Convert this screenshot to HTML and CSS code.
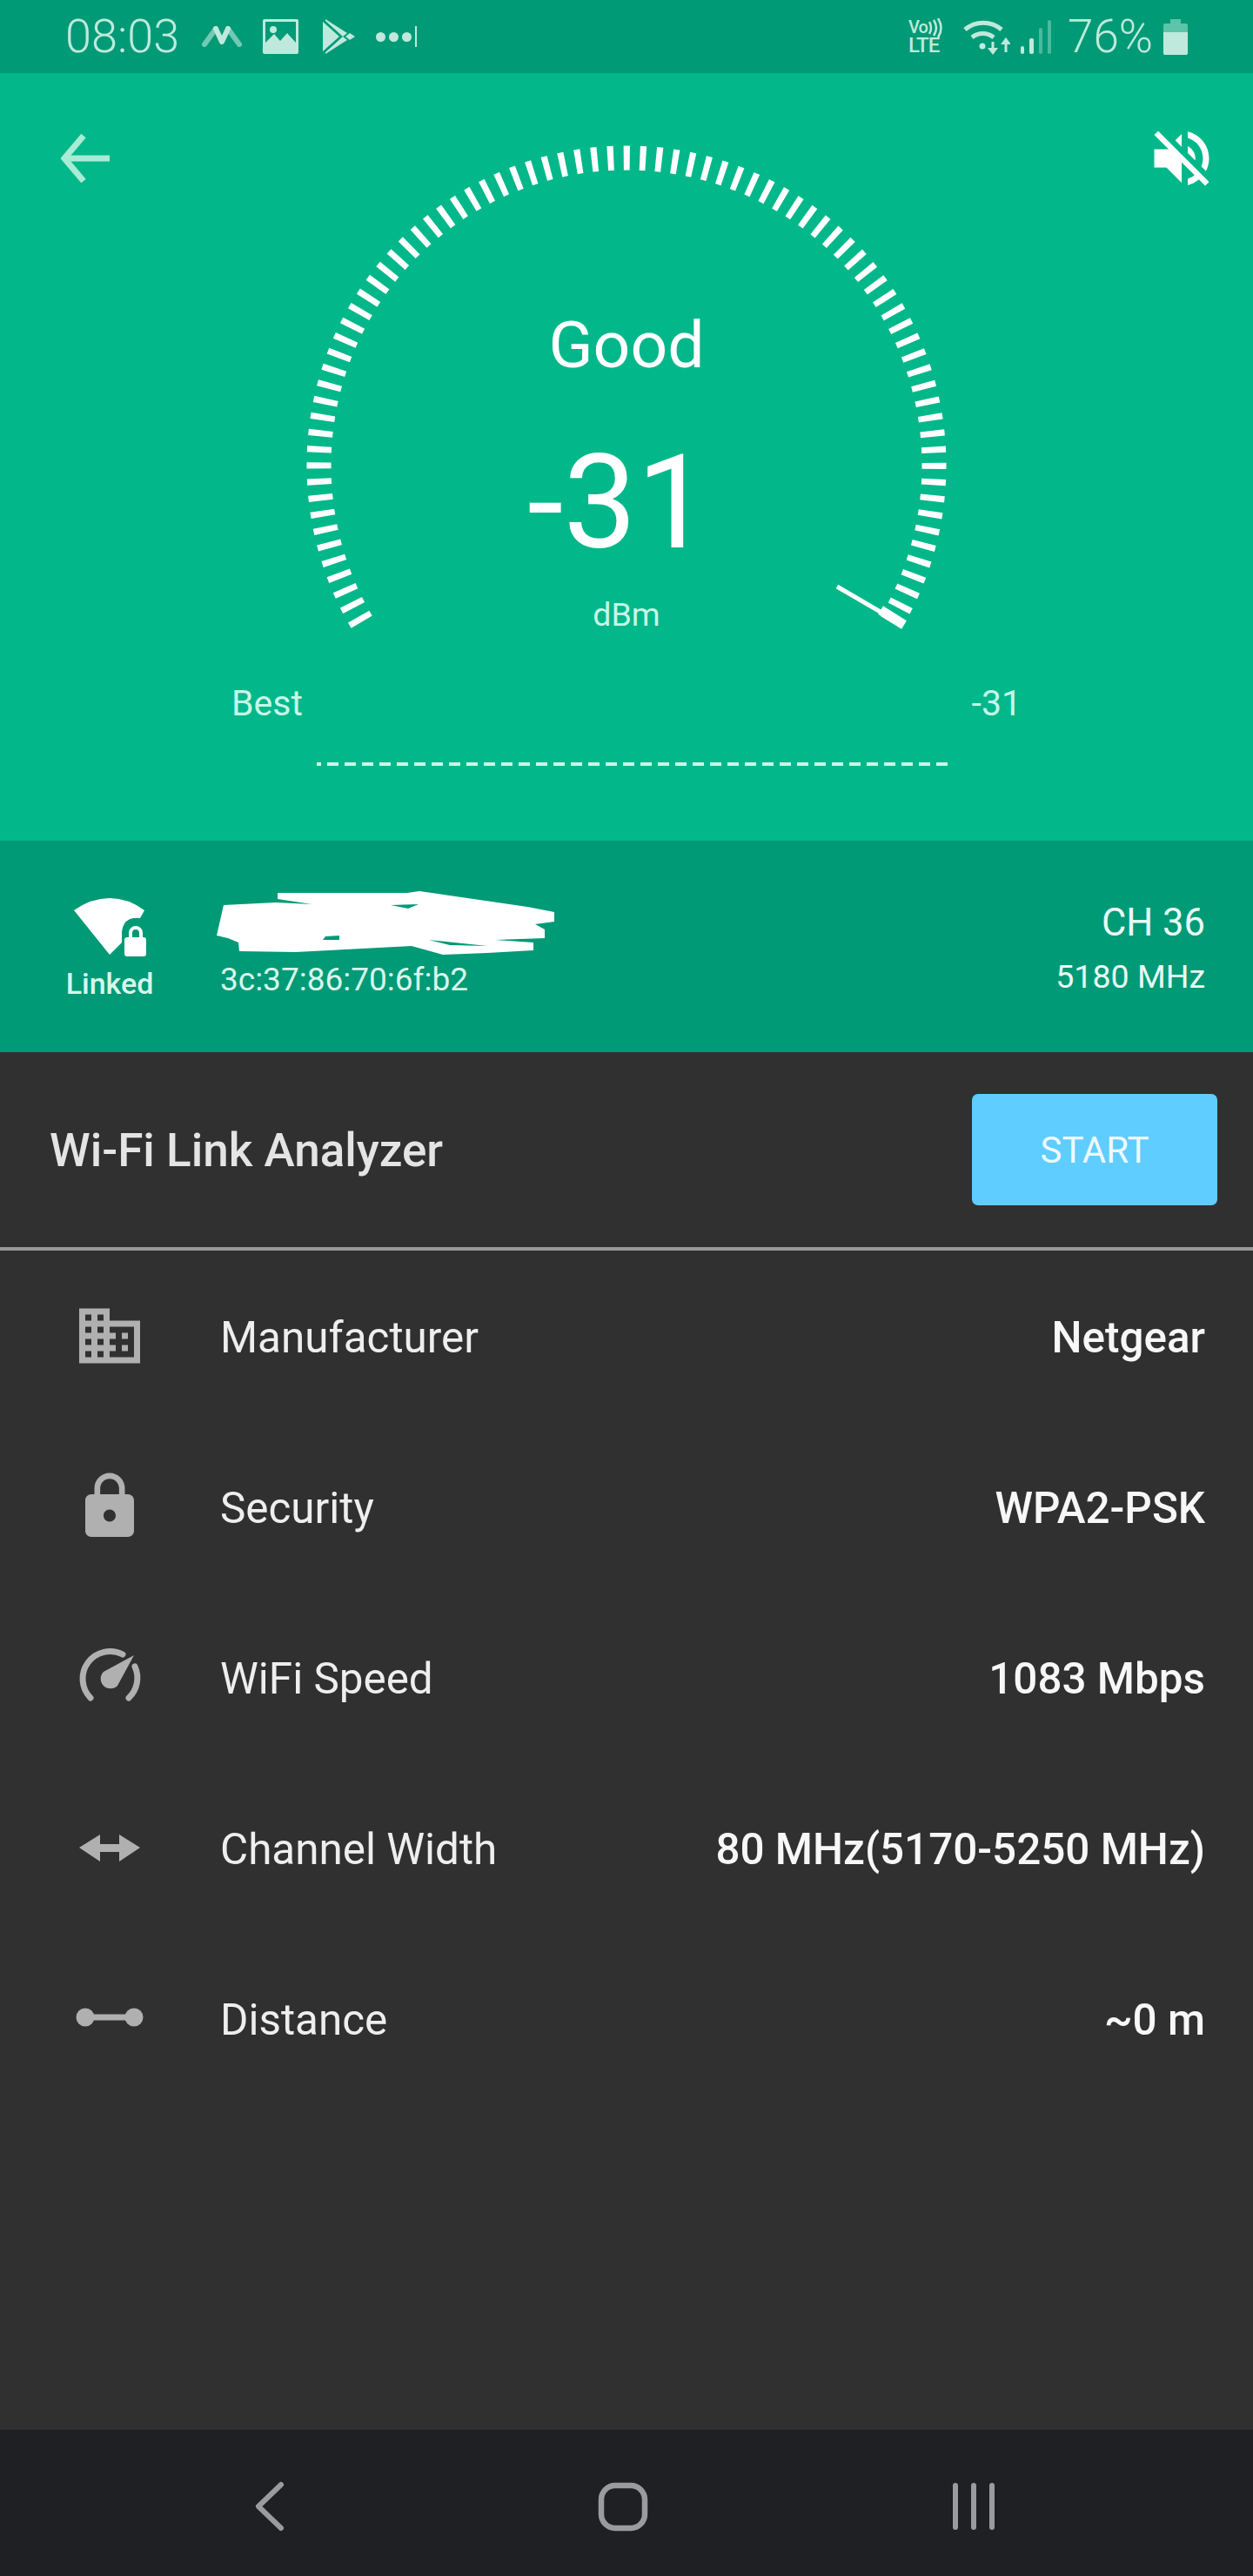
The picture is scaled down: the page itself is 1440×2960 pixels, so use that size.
FILE: index.html
```html
<!DOCTYPE html>
<html lang="en">
<head>
    <meta charset="UTF-8">
    <meta name="viewport" content="width=device-width, initial-scale=1.0">
    <title>Wi-Fi Link Analyzer</title>
    <link rel="stylesheet" href="styles.css">
</head>
<body>
    <div class="status-bar">
        <div class="status-left">
            <span class="clock">08:03</span>
            <svg class="st-m" width="46" height="24" viewBox="0 0 46 24">
                <path class="dim" d="M3 21L16 3M43 21L30 3" fill="none" stroke-width="6" stroke-linecap="round"/>
                <path d="M16 3L23 18L30 3" fill="none" stroke-width="6" stroke-linecap="round" stroke-linejoin="round"/>
            </svg>
            <svg class="st-img" width="41" height="40" viewBox="0 0 41 40">
                <path fill-rule="evenodd" d="M2 0h37a2 2 0 0 1 2 2v36a2 2 0 0 1-2 2H2a2 2 0 0 1-2-2V2a2 2 0 0 1 2-2zM3 3v24l10-10 7 8 8-9 10 11V3z"/>
                <circle cx="12" cy="12" r="4"/>
            </svg>
            <svg class="st-play" width="37" height="40" viewBox="0 0 37 40">
                <path d="M0 3L19 20L0 37zM3 0L28 16L23 20L3 2zM3 40L28 24L23 20L3 38zM26 20L31 16L37 20L31 24z"/>
            </svg>
            <div class="st-dots"><i></i><i></i><i></i><b></b></div>
        </div>
        <div class="status-right">
            <div class="st-volte">
                <div class="volte-top">
                    <span>Vo</span>
                    <svg width="17" height="22" viewBox="0 0 17 22">
                        <path d="M1 4q4 7 0 14M6 2q6 9 0 18M11 0q7 11 0 22" fill="none" stroke-width="2.5"/>
                    </svg>
                </div>
                <div class="volte-lte">LTE</div>
            </div>
            <svg class="st-wifi" width="55" height="41" viewBox="0 0 55 41">
                <path d="M3 12A32 32 0 0 1 45 12M11 21A20 20 0 0 1 36 21" fill="none" stroke-width="5"/>
                <circle cx="23" cy="31" r="3.5"/>
                <path d="M35 26v10M50 38v-10" fill="none" stroke-width="3"/>
                <path d="M29 33h12l-6 8zM44 29h12l-6-8z"/>
            </svg>
            <div class="st-signal"><i class="s1"></i><i class="s2"></i><i class="s3"></i><i class="s4"></i></div>
            <span class="battery-pct">76%</span>
            <div class="battery"><div class="battery-cap"></div><div class="battery-body"><div class="battery-fill"></div></div></div>
        </div>
    </div>

    <div class="meter">
        <div class="meter-top">
            <svg class="back" width="56" height="56" viewBox="0 0 56 56">
                <path d="M56 28H4M26 2L4 28L26 54" fill="none" stroke-width="7"/>
            </svg>
            <div class="gauge">
                <svg class="gauge-ticks" width="760" height="590" viewBox="0 0 760 590">
                    <path class="ticks" d="M77 567A353.5 353.5 0 1 1 683 567"/>
                    <path class="needle" d="M622 524L682 559"/>
                    <path class="needle-end" d="M672 551L699 568"/>
                </svg>
                <div class="gauge-word">Good</div>
                <div class="gauge-value">-31</div>
                <div class="gauge-unit">dBm</div>
            </div>
            <svg class="mute" width="84" height="84" viewBox="0 0 24 24">
                <path d="M16.5 12c0-1.77-1.02-3.29-2.5-4.03v2.21l2.45 2.45c.03-.2.05-.41.05-.63zm2.5 0c0 .94-.2 1.82-.54 2.64l1.51 1.51C20.63 14.91 21 13.5 21 12c0-4.28-2.99-7.86-7-8.77v2.06c2.89.86 5 3.54 5 6.71zM4.27 3L3 4.27 7.73 9H3v6h4l5 5v-6.73l4.25 4.25c-.67.52-1.42.93-2.25 1.18v2.06c1.38-.31 2.63-.95 3.69-1.81L19.73 21 21 19.73l-9-9L4.27 3zM12 4L9.91 6.09 12 8.18V4z"/>
            </svg>
        </div>
        <div class="range">
            <span>Best</span>
            <span>-31</span>
        </div>
        <div class="range-line"></div>
    </div>

    <div class="link-strip">
        <div class="link-state">
            <svg width="90" height="68" viewBox="0 0 90 68">
                <path d="M2 14Q22 0 43 0Q64 0 83 14L78 23Q58 21 57 40V51L43 65z"/>
                <path fill-rule="evenodd" d="M63 45h2v-5a8 8 0 0 1 16 0v5h1a3 3 0 0 1 3 3v16a3 3 0 0 1-3 3H63a3 3 0 0 1-3-3V48a3 3 0 0 1 3-3zm6 0h8v-5a4 4 0 0 0-8 0z"/>
            </svg>
            <div class="link-label">Linked</div>
        </div>
        <div class="link-name">
            <svg class="scribble" width="388" height="73" viewBox="0 0 388 73">
                <path fill-rule="evenodd" d="M70 2L219 2L233 0L357 18L388 24V35L366 38L377 44V54L320 56L364 59V68L311 71L260 73L224 63L91 70L26 69L25 59L13 54L0 51L8 16L68 13L109 15L70 9zM200 16L232 15L220 20zM244 56L311 63L268 62zM125 52L141 51V56L122 56z"/>
            </svg>
            <div class="mac">3c:37:86:70:6f:b2</div>
        </div>
        <div class="link-channel">
            <div class="channel">CH 36</div>
            <div class="freq">5180 MHz</div>
        </div>
    </div>

    <div class="panel">
        <div class="panel-head">
            <div class="panel-title">Wi-Fi Link Analyzer</div>
            <button class="start-btn">START</button>
        </div>
        <div class="row">
            <svg class="row-icon" width="84" height="84" viewBox="0 0 24 24">
                <path d="M12 7V3H2v18h20V7H12zM6 19H4v-2h2v2zm0-4H4v-2h2v2zm0-4H4V9h2v2zm0-4H4V5h2v2zm4 12H8v-2h2v2zm0-4H8v-2h2v2zm0-4H8V9h2v2zm0-4H8V5h2v2zm10 12h-8v-2h2v-2h-2v-2h2v-2h-2V9h8v10zm-2-8h-2v2h2v-2zm0 4h-2v2h2v-2z"/>
            </svg>
            <span class="row-label">Manufacturer</span>
            <span class="row-value">Netgear</span>
        </div>
        <div class="row">
            <svg class="row-icon" width="84" height="84" viewBox="0 0 24 24">
                <path d="M18 8h-1V6c0-2.76-2.24-5-5-5S7 3.24 7 6v2H6c-1.1 0-2 .9-2 2v10c0 1.1.9 2 2 2h12c1.1 0 2-.9 2-2V10c0-1.1-.9-2-2-2zm-6 9c-1.1 0-2-.9-2-2s.9-2 2-2 2 .9 2 2-.9 2-2 2zm3.1-9H8.9V6c0-1.71 1.39-3.1 3.1-3.1 1.71 0 3.1 1.39 3.1 3.1v2z"/>
            </svg>
            <span class="row-label">Security</span>
            <span class="row-value">WPA2-PSK</span>
        </div>
        <div class="row">
            <svg class="row-icon" width="84" height="84" viewBox="0 0 84 84">
                <path d="M20 66A31.5 31.5 0 0 1 57 16M71 30A31.5 31.5 0 0 1 64 66" fill="none" stroke="#b0b0b0" stroke-width="7" stroke-linecap="round"/>
                <path d="M70 17L51 52A11 11 0 1 1 35 36z"/>
            </svg>
            <span class="row-label">WiFi Speed</span>
            <span class="row-value">1083 Mbps</span>
        </div>
        <div class="row">
            <svg class="row-icon" width="84" height="84" viewBox="0 0 84 84">
                <path d="M7 42L31 27V38H53V27L77 42L53 58V47H31V58z"/>
            </svg>
            <span class="row-label">Channel Width</span>
            <span class="row-value">80 MHz(5170-5250 MHz)</span>
        </div>
        <div class="row">
            <svg class="row-icon" width="84" height="84" viewBox="0 0 84 84">
                <circle cx="14" cy="41" r="10.5"/>
                <circle cx="70" cy="41" r="10.5"/>
                <rect x="14" y="37.5" width="56" height="7"/>
            </svg>
            <span class="row-label">Distance</span>
            <span class="row-value">~0 m</span>
        </div>
    </div>

    <div class="nav-bar">
        <svg width="60" height="60" viewBox="0 0 60 60">
            <path d="M40 5L14 30L40 55" fill="none" stroke-width="6" stroke-linecap="round" stroke-linejoin="round"/>
        </svg>
        <svg width="60" height="60" viewBox="0 0 60 60">
            <rect x="5" y="6" width="50" height="49" rx="16" fill="none" stroke-width="6.5"/>
        </svg>
        <svg width="60" height="60" viewBox="0 0 60 60">
            <path d="M9 6V54M30 6V54M51 6V54" fill="none" stroke-width="6" stroke-linecap="round"/>
        </svg>
    </div>
</body>
</html>
```

FILE: styles.css
```css
* {
    box-sizing: border-box;
}
body {
    font-family: Roboto, "Liberation Sans", sans-serif;
    margin: 0;
    width: 1440px;
    height: 2960px;
    display: flex;
    flex-direction: column;
    background: #303030;
    overflow: hidden;
}
svg {
    display: block;
    flex: none;
}

/* status bar */
.status-bar {
    height: 84px;
    flex: none;
    background: #009a76;
    color: #bfe9dd;
    display: flex;
    justify-content: space-between;
    align-items: center;
    padding: 0 75px;
}
.status-bar svg {
    fill: #bfe9dd;
    stroke: #bfe9dd;
    stroke-width: 0;
}
.status-bar svg .dim {
    opacity: 0.6;
}
.status-left, .status-right {
    display: flex;
    align-items: center;
}
.clock {
    font-size: 54px;
    font-weight: 300;
    line-height: 60px;
    width: 157px;
}
.st-img {
    margin-left: 24px;
}
.st-play {
    margin-left: 28px;
}
.st-dots {
    margin-left: 24px;
    display: flex;
    align-items: center;
    gap: 4px;
}
.st-dots i {
    width: 11px;
    height: 11px;
    border-radius: 50%;
    background: #bfe9dd;
}
.st-dots b {
    width: 2px;
    height: 24px;
    background: #bfe9dd;
}
.st-volte {
    width: 42px;
    font-weight: 500;
}
.volte-top {
    display: flex;
    align-items: center;
    height: 21px;
}
.volte-top span {
    font-size: 20px;
    line-height: 21px;
    letter-spacing: -1px;
    width: 23px;
}
.volte-lte {
    font-size: 24px;
    line-height: 21px;
    letter-spacing: -1px;
}
.st-wifi {
    margin-left: 20px;
}
.st-signal {
    margin-left: 12px;
    width: 35px;
    height: 39px;
    display: flex;
    align-items: flex-end;
    gap: 6px;
}
.st-signal i {
    width: 4.5px;
    border-radius: 2px;
    background: #bfe9dd;
}
.st-signal .s1 { height: 9px; }
.st-signal .s2 { height: 18px; }
.st-signal .s3 { height: 30px; opacity: 0.4; }
.st-signal .s4 { height: 39px; opacity: 0.4; }
.battery-pct {
    font-size: 53px;
    font-weight: 300;
    line-height: 60px;
    margin-left: 19px;
}
.battery {
    margin-left: 12px;
    width: 28px;
    height: 41px;
    display: flex;
    flex-direction: column;
    align-items: center;
}
.battery-cap {
    width: 12px;
    height: 5px;
    background: #5cc4a8;
}
.battery-body {
    flex: 1;
    width: 28px;
    border-radius: 2px;
    background: #5cc4a8;
    display: flex;
    align-items: flex-end;
}
.battery-fill {
    width: 100%;
    height: 26px;
    background: #bfe9dd;
    border-radius: 0 0 2px 2px;
}

/* meter */
.meter {
    height: 882px;
    flex: none;
    background: #02b88a;
    color: #fff;
}
.meter-top {
    display: grid;
    grid-template-columns: 340px 760px 340px;
    padding-top: 66px;
}
.back {
    stroke: #a8ecd5;
    margin: 4px 0 0 70px;
}
.mute {
    fill: #fff;
    justify-self: end;
    margin: -10px 40px 0 0;
}
.gauge {
    position: relative;
    height: 590px;
    padding-top: 201px;
    text-align: center;
}
.gauge-ticks {
    position: absolute;
    left: 0;
    top: 0;
}
.ticks {
    fill: none;
    stroke: #fff;
    stroke-width: 28px;
    stroke-dasharray: 7 11.51;
    stroke-dashoffset: -2.67;
}
.needle {
    fill: none;
    stroke: #fff;
    stroke-width: 5px;
}
.needle-end {
    fill: none;
    stroke: #fff;
    stroke-width: 11px;
}
.gauge-word {
    font-size: 75px;
    line-height: 90px;
}
.gauge-value {
    font-size: 150px;
    line-height: 150px;
    margin-top: 62px;
    padding-right: 18px;
}
.gauge-unit {
    font-size: 37.5px;
    line-height: 40px;
    margin-top: 33px;
    color: #c8f7e8;
}
.range {
    display: flex;
    justify-content: space-between;
    padding: 46px 266px 0 266px;
    font-size: 41px;
    line-height: 44px;
    color: #c8f7e8;
}
.range-line {
    height: 4px;
    margin: 46px 349px 0 364px;
    background: repeating-linear-gradient(90deg, #c8f7e8 0 13px, transparent 13px 20px) -8px 0 / 20px 100% repeat-x;
}

/* link strip */
.link-strip {
    height: 243px;
    flex: none;
    background: #009a76;
    display: flex;
    padding: 0 55px 0 40px;
    color: #d8f7ec;
}
.link-state {
    width: 172px;
    padding-top: 66px;
    display: flex;
    flex-direction: column;
    align-items: center;
}
.link-state svg {
    fill: #fff;
    margin-left: 4px;
}
.link-label {
    font-size: 34px;
    font-weight: 500;
    line-height: 40px;
    margin-top: 10px;
}
.link-name {
    flex: 1;
    margin-left: 37px;
    padding-top: 58px;
}
.scribble {
    fill: #fff;
}
.mac {
    font-size: 37px;
    line-height: 44px;
    margin: 7px 0 0 4px;
}
.link-channel {
    text-align: right;
    padding-top: 69px;
    color: #eafaf4;
}
.channel {
    font-size: 43.5px;
    line-height: 52px;
}
.freq {
    font-size: 37.5px;
    line-height: 44px;
    margin-top: 13px;
}

/* panel */
.panel {
    flex: 1;
    color: #eee;
}
.panel-head {
    height: 228px;
    border-bottom: 4px solid #999;
    display: flex;
    align-items: center;
    justify-content: space-between;
    padding: 2px 41px 0 57px;
}
.panel-title {
    font-size: 53px;
    font-weight: 500;
    color: #e4e4e4;
}
.start-btn {
    width: 282px;
    height: 128px;
    margin-top: -2px;
    border: none;
    border-radius: 7px;
    background: #5fcdff;
    color: #eef9ff;
    font-family: inherit;
    font-size: 42px;
}
.row {
    height: 196px;
    display: flex;
    align-items: center;
    padding: 0 55px 0 84px;
}
.row-icon {
    fill: #b0b0b0;
}
.row-label {
    margin-left: 85px;
    padding-top: 3px;
    font-size: 49.4px;
    flex: 1;
}
.row-value {
    padding-top: 3px;
    font-size: 49.4px;
    font-weight: 500;
    color: #f7f7f7;
}

/* nav bar */
.nav-bar {
    height: 168px;
    flex: none;
    background: #1e2023;
    display: flex;
    align-items: center;
    gap: 343px;
    padding: 7px 0 0 283px;
}
.nav-bar svg {
    stroke: #9a9b9e;
}
```
